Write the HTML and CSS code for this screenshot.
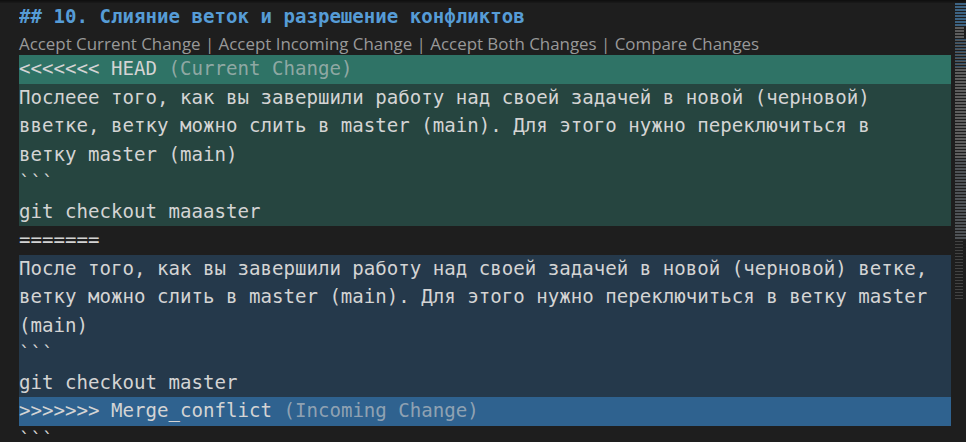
FILE: index.html
```html
<!DOCTYPE html>
<html lang="ru">
<head>
<meta charset="utf-8">
<title>Merge conflict</title>
<link rel="stylesheet" href="styles.css">
</head>
<body>
<div class="editor">
  <div class="scroll-shadow"></div>
  <div class="main">
    <div class="gutter"></div>
    <div class="lines">
      <div class="line heading">## 10. Слияние веток и разрешение конфликтов</div>
      <div class="codelens">Accept Current Change | Accept Incoming Change | Accept Both Changes | Compare Changes</div>
      <div class="line cur-head">&lt;&lt;&lt;&lt;&lt;&lt;&lt; HEAD <span class="deco">(Current Change)</span></div>
      <div class="line cur">Послеее того, как вы завершили работу над своей задачей в новой (черновой)</div>
      <div class="line cur">вветке, ветку можно слить в master (main). Для этого нужно переключиться в</div>
      <div class="line cur">ветку master (main)</div>
      <div class="line cur">```</div>
      <div class="line cur">git checkout maaaster</div>
      <div class="line">=======</div>
      <div class="line inc">После того, как вы завершили работу над своей задачей в новой (черновой) ветке,</div>
      <div class="line inc">ветку можно слить в master (main). Для этого нужно переключиться в ветку master</div>
      <div class="line inc">(main)</div>
      <div class="line inc">```</div>
      <div class="line inc">git checkout master</div>
      <div class="line inc-head">&gt;&gt;&gt;&gt;&gt;&gt;&gt; Merge_conflict <span class="deco">(Incoming Change)</span></div>
      <div class="line last">```</div>
    </div>
    <div class="minimap">
      <div class="mm-block mm-a"></div>
      <div class="mm-block mm-b"></div>
      <div class="mm-block mm-c"></div>
      <div class="mm-block mm-d"></div>
      <div class="mm-block mm-e"></div>
      <div class="mm-block mm-f"></div>
    </div>
  </div>
</div>
</body>
</html>
```
FILE: styles.css
```css
html, body {
  margin: 0;
  padding: 0;
  background: #1e1e1e;
  width: 966px;
  height: 442px;
  overflow: hidden;
}

.editor {
  display: flex;
  flex-direction: column;
  height: 442px;
}

.scroll-shadow {
  height: 3px;
  background: linear-gradient(to bottom, #0e0e0e, #1a1a1a);
  flex: none;
}

.main {
  display: flex;
  flex: 1;
}

.gutter {
  width: 19px;
  flex: none;
}

.lines {
  width: 932px;
  flex: none;
  display: flex;
  flex-direction: column;
}

.line {
  height: 28.5px;
  line-height: 28.5px;
  font-family: "DejaVu Sans Mono", "Liberation Mono", monospace;
  font-size: 19.1px;
  color: #d4d4d4;
  white-space: pre;
  overflow: hidden;
  flex: none;
}

.last {
  height: 16px;
}

.heading {
  color: #569cd6;
  font-weight: bold;
}

.codelens {
  height: 23.5px;
  line-height: 23.5px;
  font-family: "Open Sans", "Noto Sans", sans-serif;
  font-size: 16.9px;
  color: #999999;
  white-space: pre;
  flex: none;
}

.cur-head { background: #2f7366; }
.cur { background: #264540; }
.inc { background: #25394b; }
.inc-head { background: #2f628f; }

.deco {
  color: rgba(200, 200, 200, 0.65);
}

.minimap {
  width: 11px;
  margin-left: 4px;
  flex: none;
  display: flex;
  flex-direction: column;
}

.mm-block {
  background: repeating-linear-gradient(to bottom, rgba(170, 170, 170, 0.45) 0 2px, transparent 2px 3px);
}

.mm-a { height: 24px; background: repeating-linear-gradient(to bottom, rgba(86, 156, 214, 0.55) 0 2px, transparent 2px 3px); }
.mm-b { height: 12px; width: 9px; }
.mm-c { height: 30px; background: repeating-linear-gradient(to bottom, rgba(86, 156, 214, 0.4) 0 1px, rgba(170, 170, 170, 0.4) 1px 2px, transparent 2px 3px); }
.mm-d { height: 90px; }
.mm-e { height: 80px; background: repeating-linear-gradient(to bottom, rgba(150, 160, 170, 0.4) 0 2px, transparent 2px 3px); }
.mm-f { height: 60px; width: 8px; margin-top: 2px; background: repeating-linear-gradient(to bottom, rgba(150, 150, 150, 0.3) 0 1px, transparent 1px 3px); }
```
